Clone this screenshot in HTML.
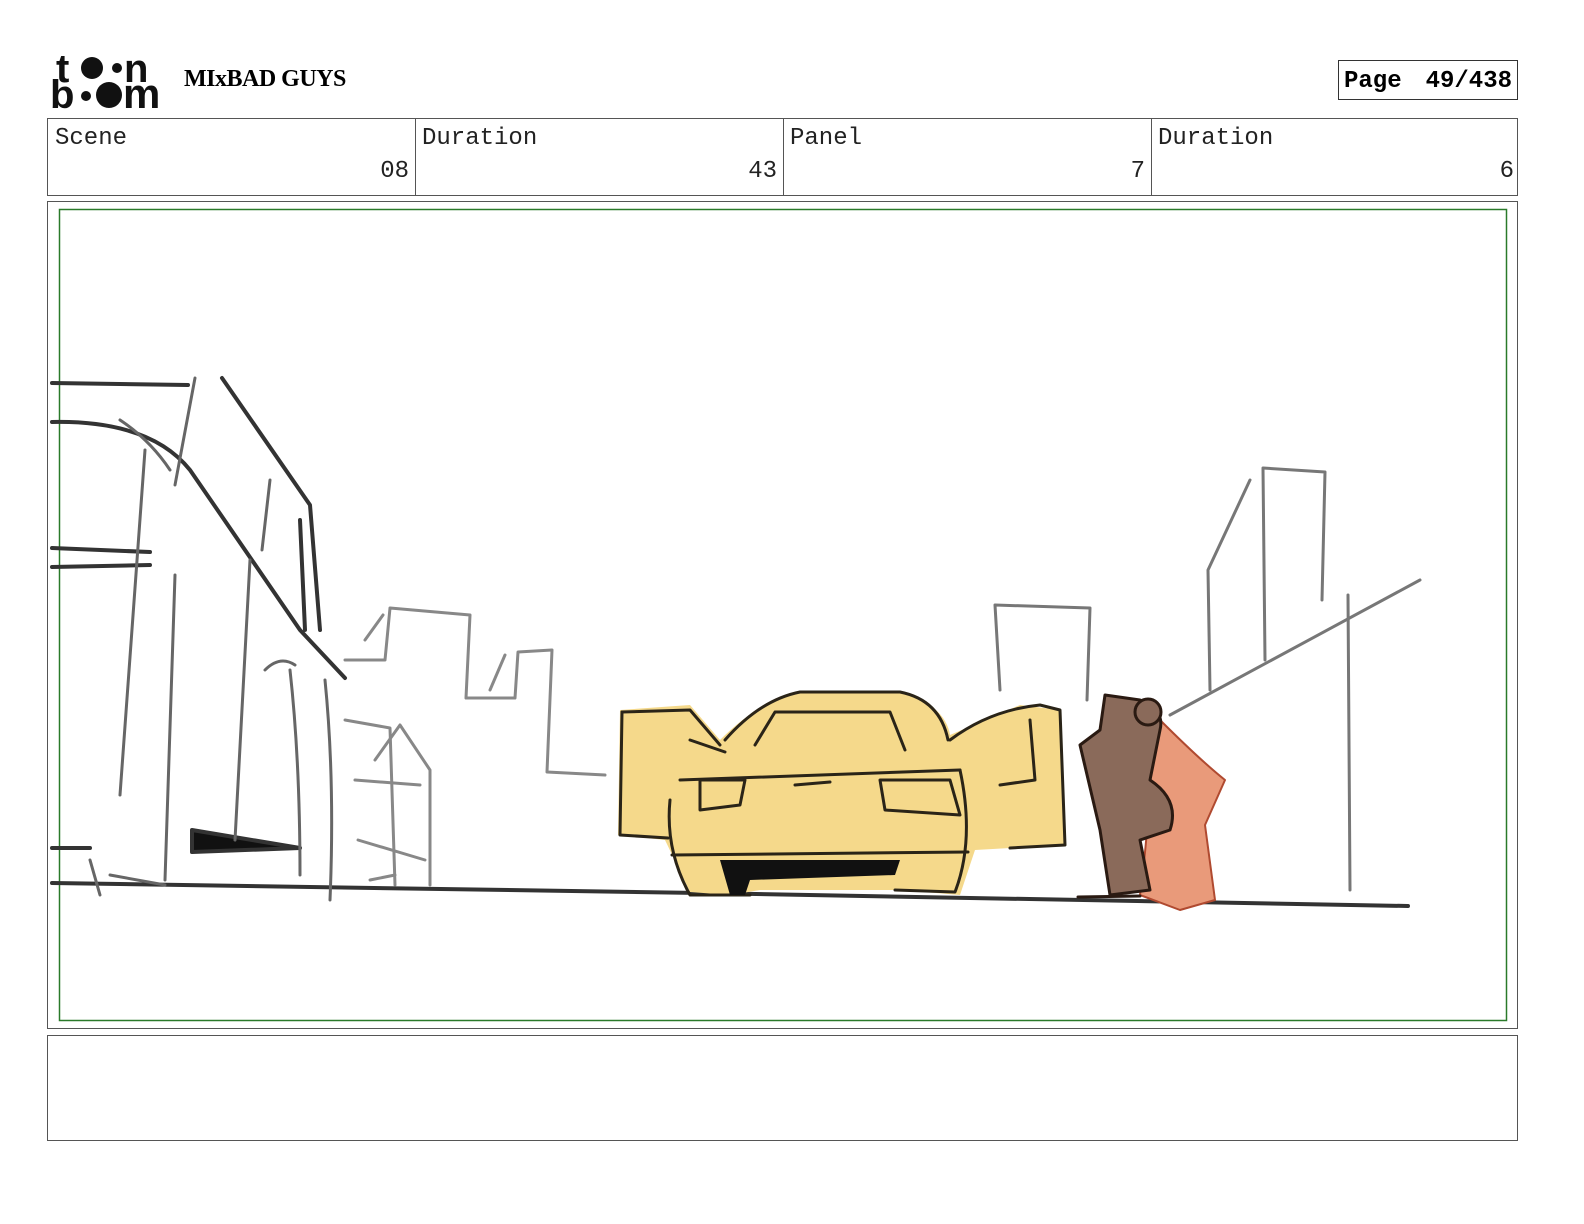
<!DOCTYPE html>
<html><head><meta charset="utf-8"><style>
html,body{margin:0;padding:0;background:#fff;width:1584px;height:1224px;overflow:hidden;font-family:"Liberation Mono",monospace}
</style></head><body>
<svg width="1584" height="1224" viewBox="0 0 1584 1224" xmlns="http://www.w3.org/2000/svg" style="position:absolute;left:0;top:0">
<g fill="#111">
<text x="56" y="82" font-family="Liberation Sans" font-weight="bold" font-size="40">t</text>
<circle cx="92" cy="68" r="11"/><circle cx="117" cy="68" r="5"/>
<text x="124" y="82" font-family="Liberation Sans" font-weight="bold" font-size="40">n</text>
<text x="50" y="108" font-family="Liberation Sans" font-weight="bold" font-size="40">b</text>
<circle cx="86" cy="96" r="5"/><circle cx="109" cy="95" r="13"/>
<text x="123" y="108" font-family="Liberation Sans" font-weight="bold" font-size="42">m</text>
</g>
<text x="184" y="86" font-family="Liberation Serif" font-weight="bold" font-size="24" letter-spacing="-0.5">MIxBAD GUYS</text>
<rect x="1338.5" y="60.5" width="179" height="39" fill="none" stroke="#333"/>
<text x="1344" y="87" font-family="Liberation Mono" font-weight="bold" font-size="24">Page</text>
<text x="1512" y="87" text-anchor="end" font-family="Liberation Mono" font-weight="bold" font-size="24">49/438</text>
<rect x="47.5" y="118.5" width="1470" height="77" fill="none" stroke="#555"/>
<line x1="415.5" y1="118" x2="415.5" y2="195" stroke="#555"/>
<line x1="783.5" y1="118" x2="783.5" y2="195" stroke="#555"/>
<line x1="1151.5" y1="118" x2="1151.5" y2="195" stroke="#555"/>
<g font-family="Liberation Mono" font-size="24" fill="#222">
<text x="55" y="144">Scene</text><text x="409" y="177" text-anchor="end">08</text>
<text x="422" y="144">Duration</text><text x="777" y="177" text-anchor="end">43</text>
<text x="790" y="144">Panel</text><text x="1145" y="177" text-anchor="end">7</text>
<text x="1158" y="144">Duration</text><text x="1514" y="177" text-anchor="end">6</text>
</g>
<rect x="47.5" y="201.5" width="1470" height="827" fill="none" stroke="#555"/>
<rect x="59.5" y="209.5" width="1447" height="811" fill="none" stroke="#2a7a2a" stroke-width="1.5"/>
<rect x="47.5" y="1035.5" width="1470" height="105" fill="none" stroke="#555"/>
<g fill="none" stroke-linecap="round" stroke-linejoin="round">
<path d="M52 883 L700 893 L1408 906" stroke="#333" stroke-width="4"/>
<g stroke="#333" stroke-width="4">
<path d="M52 383 L188 385"/><path d="M52 422 Q150 420 190 470 L300 630 L345 678"/>
<path d="M222 378 L310 505 L320 630"/><path d="M300 520 L305 630"/>
<path d="M52 548 L150 552"/><path d="M52 567 L150 565"/>
<path d="M52 848 L90 848"/><path d="M192 830 L300 848 L192 852 Z" fill="#111"/>
</g>
<g stroke="#666" stroke-width="3">
<path d="M120 420 Q150 440 170 470"/><path d="M195 378 L175 485"/>
<path d="M145 450 L120 795"/><path d="M175 575 L165 880"/><path d="M250 560 L235 840"/>
<path d="M270 480 L262 550"/><path d="M290 670 Q300 760 300 875"/><path d="M325 680 Q335 780 330 900"/>
<path d="M265 670 Q280 655 295 665"/><path d="M90 860 L100 895"/><path d="M110 875 L165 885"/>
</g>
<g stroke="#888" stroke-width="3">
<path d="M345 660 L385 660 L390 608 L470 615 L466 698 L515 698 L518 652 L552 650 L547 772 L605 775"/>
<path d="M365 640 L383 615"/><path d="M490 690 L505 655"/>
<path d="M345 720 L390 728 L395 885"/><path d="M375 760 L400 725 L430 770 L430 885"/>
<path d="M355 780 L420 785"/><path d="M358 840 L425 860"/><path d="M370 880 L395 875"/>
</g>
<g stroke="#777" stroke-width="3">
<path d="M1000 690 L995 605 L1090 608 L1087 700"/>
<path d="M1210 690 L1208 570 L1250 480"/><path d="M1265 660 L1263 468 L1325 472 L1322 600"/>
<path d="M1348 595 L1350 890"/><path d="M1170 715 L1420 580"/>
</g>
<path d="M620 710 L690 705 L720 740 Q760 700 800 692 L900 692 Q945 705 950 735 L1020 705 L1060 710 L1065 845 L975 850 L960 895 L900 890 L760 890 L730 895 L690 892 L665 840 L618 835 Z" fill="#f5d98b" stroke="none"/>
<g stroke="#2a2418" stroke-width="3">
<path d="M622 712 L620 835 L668 838"/><path d="M622 712 L690 710 L720 745"/>
<path d="M725 740 Q760 700 800 692 L900 692 Q940 700 948 740"/>
<path d="M755 745 L775 712 L890 712 L905 750"/><path d="M680 780 L960 770"/>
<path d="M670 800 Q665 850 690 895 L750 895"/><path d="M960 770 Q975 840 955 892 L895 890"/>
<path d="M672 855 L968 852"/><path d="M700 780 L745 780 L740 805 L700 810 Z"/>
<path d="M880 780 L950 780 L960 815 L885 810 Z"/><path d="M795 785 L830 782"/>
<path d="M950 740 Q990 710 1040 705 L1060 710 L1065 845 L1010 848"/>
<path d="M1030 720 L1035 780 L1000 785"/><path d="M690 740 L725 752"/>
</g>
<path d="M720 860 L900 860 L895 875 L750 880 L745 895 L730 895 Z" fill="#111"/>
<path d="M1160 720 Q1200 760 1225 780 L1205 825 L1215 900 L1180 910 L1140 895 Q1150 820 1150 760 Z" fill="#e99a7a" stroke="#b04a30" stroke-width="2"/>
<path d="M1105 695 L1140 700 Q1165 710 1160 730 L1150 780 Q1180 800 1170 830 L1140 840 L1150 890 L1110 895 L1100 830 L1080 745 L1100 730 Z" fill="#8a6a5a" stroke="#2a1a12" stroke-width="3"/>
<circle cx="1148" cy="712" r="13" fill="#8a6a5a" stroke="#2a1a12" stroke-width="3"/>
<path d="M1078 897 L1140 896" stroke="#2a1a12" stroke-width="3"/>
</g>
</svg>
</body></html>
